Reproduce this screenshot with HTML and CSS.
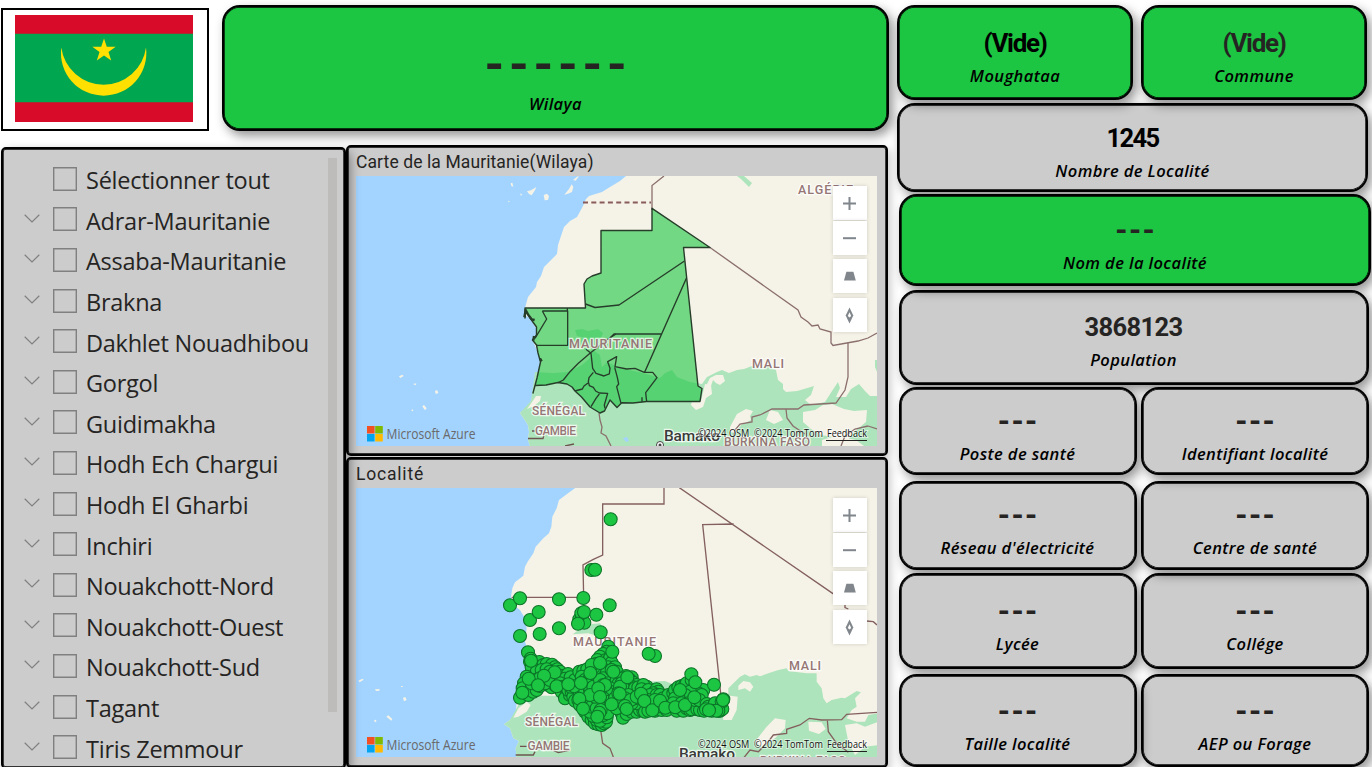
FILE: index.html
```html
<!DOCTYPE html>
<html lang="fr">
<head>
<meta charset="utf-8">
<title>Carte de la Mauritanie</title>
<link rel="stylesheet" href="styles.css">
</head>
<body>
<svg class="defs" width="0" height="0" aria-hidden="true">
  <defs>
    <marker id="dot" markerUnits="userSpaceOnUse" markerWidth="46" markerHeight="46" viewBox="-23 -23 46 46" refX="0" refY="0">
      <circle r="19.5" fill="#1cc642" stroke="#0c7428" stroke-width="3.200"/>
    </marker>
    <symbol id="chev" viewBox="0 0 16 9"><path d="M.7.8 8 8 15.3.8" fill="none" stroke="#808080" stroke-width="1.2"/></symbol>
    <symbol id="ms" viewBox="0 0 16 16"><path fill="#f25022" d="M0 0h7.6v7.5H0z"/><path fill="#7fba00" d="M8.2 0h7.6v7.5H8.2z"/><path fill="#00a4ef" d="M0 8h7.6v7.5H0z"/><path fill="#ffb900" d="M8.2 8h7.6v7.5H8.2z"/></symbol>
    <symbol id="plus" viewBox="0 0 34 34"><path d="M10 17.5h13M16.500 11v13" stroke="#80868b" stroke-width="2" fill="none"/></symbol>
    <symbol id="minus" viewBox="0 0 34 34"><path d="M10 17.200h13" stroke="#80868b" stroke-width="2"/></symbol>
    <symbol id="pitch" viewBox="0 0 34 34"><path d="M13.400 12.7h7L22.800 21.4H11z" fill="#80868b"/></symbol>
    <symbol id="compass" viewBox="0 0 34 34"><path d="M16.500 9.500 20.300 17.500 16.500 25.500 12.700 17.500z" fill="#80868b"/><path d="M16.500 14.300 18.200 18 16.500 19.600 14.800 18z" fill="#fff"/></symbol>
  </defs>
</svg>
<main class="page">
  <section class="left">
    <header class="top">
      <div class="flag">
        <svg width="178" height="107" viewBox="0 0 178 107">
          <path fill="#d80b29" d="M0 0h178v107H0z"/>
          <path fill="#00a650" d="M0 18.700h178v68.600H0z"/>
          <path fill="#ffe000" d="M46.300 32.500A42.700 42.700 0 1 0 131 32.500A42.700 42.700 0 0 1 46.300 32.500z"/>
          <path fill="#ffe000" d="M89 23.500 91.800 31.800 100.700 31.800 93.500 37 96.200 45.500 89 40.500 81.800 45.500 84.500 37 77.300 31.800 86.200 31.800z"/>
        </svg>
      </div>
      <article class="card green wilaya"><b class="value">------</b><span class="label">Wilaya</span></article>
    </header>
    <div class="lower">
      <aside class="slicer">
        <ul class="tree">
          <li class="all"><i></i><span>Sélectionner tout</span></li>
          <li><svg><use href="#chev"/></svg><i></i><span>Adrar-Mauritanie</span></li>
          <li><svg><use href="#chev"/></svg><i></i><span>Assaba-Mauritanie</span></li>
          <li><svg><use href="#chev"/></svg><i></i><span>Brakna</span></li>
          <li><svg><use href="#chev"/></svg><i></i><span>Dakhlet Nouadhibou</span></li>
          <li><svg><use href="#chev"/></svg><i></i><span>Gorgol</span></li>
          <li><svg><use href="#chev"/></svg><i></i><span>Guidimakha</span></li>
          <li><svg><use href="#chev"/></svg><i></i><span>Hodh Ech Chargui</span></li>
          <li><svg><use href="#chev"/></svg><i></i><span>Hodh El Gharbi</span></li>
          <li><svg><use href="#chev"/></svg><i></i><span>Inchiri</span></li>
          <li><svg><use href="#chev"/></svg><i></i><span>Nouakchott-Nord</span></li>
          <li><svg><use href="#chev"/></svg><i></i><span>Nouakchott-Ouest</span></li>
          <li><svg><use href="#chev"/></svg><i></i><span>Nouakchott-Sud</span></li>
          <li><svg><use href="#chev"/></svg><i></i><span>Tagant</span></li>
          <li><svg><use href="#chev"/></svg><i></i><span>Tiris Zemmour</span></li>
        </ul>
        <div class="thumb"></div>
      </aside>
      <div class="maps">
        <section class="panel panel-a">
          <h2 class="title t1">Carte de la Mauritanie(Wilaya)</h2>
          <div class="map">
            <svg class="canvas" width="521" height="270" viewBox="356 176 521 270">
              <path fill="#a3d4ff" d="M356 176h521v270H356z"/>
              <path fill="#f5f3e7" d="M626 176 620 181 610 187 602 192 589 196 586 199 583 206 577 217 570 221 564 227 561 236 558 245 557 254 550 261 544 267 541 276 537 282 536 287 528 297 525 308 526 316 530 318 537 330 536 338 533 341 539 355 541 362 536 383 533 393 531 401 526 409 520 413 528 425 529 432 528 440 530 446 877 446 877 176z"/>
              <g fill="#f5f3e7" transform="translate(345 140) scale(.33333)">
                <path d="M497 130l5-2 3 12-6-2zM546 154l12-3 16-10-4 10-10 15-8-4zM596 165l10-4 6 8-3 11-10 1zM658 164l14-17 8-14 5 8-4 15-12 5zM684 120l12-10 6-1-10 13zM490 182l5 3-5 2zM526 160l6 4-5 3zM162 709l10-5 4 4-10 6zM204 732l10-2-2 6zM270 752l7-1 3 8-8 3zM232 799l5-4 8 10-5 6zM199 810l4-2 2 4-4 2z"/>
              </g>
              <g fill="#aee4bb">
                <path d="M535 372 553 373 568 372 582 365 590 358 593 350 600 355 602 367 607 362 620 368 643 373 660 378 665 373 672 370 677 377 690 382 702 384 707 377 717 372 722 370 729 373 737 370 744 369 752 366 758 368 767 366 776 370 778 380 783 384 783 389 786 392 797 391 804 389 814 386 811 395 805 400 811 405 825 402 832 391 838 382 840 388 836 397 846 397 851 389 859 384 865 391 870 396 877 396 877 446 530 446 528 440 529 432 528 425 520 413 531 401z"/>
                <path d="M575 330 582 329 588 331 598 329 603 333 601 338 590 339 577 336zM737 176l4 3 8 8 3-4-8-7zM875 360l2 0v12l-2-5z"/>
              </g>
              <g fill="#f5f3e7">
                <path d="M692 401h9l4-17 6 1 1 9-6 4-3 9-7 3-5-5zM704 390l6-12 6-3 7 0 2 6-5 4-4-2-3-3-2 6zM730 427l7-13 9-5 7 2-3 5 1 4-10 5-6 8-5-1zM803 412l12-2 8-5 9-1 12 5 10 2 13-1-1 12-12 10-6 8-15-3-12-2-10-6-8-7zM770 410l8 2 5 8-9 4-8-4zM822 440l14-4 20 4 8 6h-42z"/>
                <path d="M527 409 532 402 536 396 541 396 540 401 534 406z"/>
              </g>
              <path fill="#a3d4ff" d="M623 438l4-1 2 4-3 1z"/>
              <g fill="none" stroke="#8b6f6e" stroke-width="1.300">
                <path stroke="#8a5b5b" stroke-width="2" stroke-dasharray="5 3.300" d="M583 202.500H651"/>
                <path d="M652 210V185.500L664 176M710 247.500 798 310 801 317 808 322 812 326 818 325 820 329 831 332 831 343 833 345.500 858 341 868 338 877 333M848 343V377L845 390 836 403 804 405 798 409H772L760 415 752 417 752 422 740 424 735 430 733 440 725 446M786 409 787 418 793 426 805 434M868 426 855 429 845 436 841 446M868 426 877 429M599 413 600 420 602 427 601 433 606 436 611 446"/>
                <path stroke="#6e5450" d="M528 438.500H543L544 435M565 446 574 444M532 431h3"/>
              </g>
              <g fill="#1cc642" fill-opacity=".6" stroke="#263d2a" stroke-width="1.400" stroke-linejoin="round">
                <path d="M525 308H585.500L584 284 587 279 592 276 601 273V230.500H652V208.300L710 247.500H683.500L698 386 702 388.500 700 401.500H646.500L633 403 621.700 402.700 617 407.500 610 400 604.500 411 600 413 590 407 581.500 397 575 391 572 387 567 384 558 382.500 546 385 535 385.500 533 393 537 378 540.500 362 538 353 536.500 345 532.500 340 536.500 335 536.500 327 530 318 526 311 525 318z"/>
                <path fill="none" d="M585.500 304 595 307.500 619 305 684.500 261M686.500 278 644.500 372.500M661.500 334H614L610 338"/>
                <g fill="none" stroke-width="4" transform="translate(510 290) scale(.33333)">
                  <path d="M172 54V63M97 63H173V166H80M97 63 110 87 75 145M318 132 290 150 240 190 205 220 180 245 160 270 145 278M228 178 243 190 248 235 258 250 282 258 298 252 300 235 293 215 320 200 315 230 350 237 375 235 403 247 428 247 441 263 407 308 410 335M396 322V335M314 232 322 262 326 282 320 290 333 340M250 247 237 263 235 275 238 287 250 292 257 303 268 309 293 310 283 345 285 355M268 312 258 325 243 350M237 277 222 288 217 297 195 303"/>
                  <path stroke-width="7" d="M43 82 47 60 55 75 65 88 74 90M72 138 70 152M90 205 95 214"/>
                </g>
              </g>
              <g class="names">
                <text x="569" y="348" textLength="83">MAURITANIE</text>
                <text x="532" y="415" class="s" textLength="53">SÉNÉGAL</text>
                <text x="535" y="435" class="s" textLength="41">GAMBIE</text>
                <text x="752" y="368" textLength="32">MALI</text>
                <text x="798" y="193.500" textLength="55">ALGÉRIE</text>
                <text x="724" y="445.500" class="s" textLength="86">BURKINA FASO</text>
                <text x="664" y="441" class="city" textLength="56">Bamako</text>
              </g>
              <circle cx="660" cy="445" r="3.500" fill="#fff" stroke="#444"/><circle cx="660" cy="445" r="1.500" fill="#444"/>
              <use href="#ms" x="367" y="426" width="16" height="16"/>
              <text class="azure" x="386.500" y="439" textLength="89" lengthAdjust="spacingAndGlyphs">Microsoft Azure</text>
              <text class="attr" x="698" y="437.300" textLength="125" lengthAdjust="spacingAndGlyphs">©2024 OSM&#160; ©2024 TomTom</text>
              <text class="attr" x="827" y="437.300" textLength="40" lengthAdjust="spacingAndGlyphs">Feedback</text>
              <path d="M826 440.500h41" stroke="#222"/>
            </svg>
            <div class="controls"><svg><use href="#plus"/></svg><svg><use href="#minus"/></svg><svg class="gap"><use href="#pitch"/></svg><svg class="gap"><use href="#compass"/></svg></div>
          </div>
        </section>
        <section class="panel panel-b">
          <h2 class="title t2">Localité</h2>
          <div class="map">
            <svg class="canvas" width="521" height="269" viewBox="356 488 521 269">
              <path fill="#a3d4ff" d="M356 488h521v269H356z"/>
              <g transform="translate(345 455) scale(.33333)">
                <path fill="#f5f3e7" d="M692 98 665 118 642 135 635 160 622 185 619 215 612 235 595 250 572 275 565 295 548 320 540 335 535 362 510 382 502 400 498 425 505 450 525 465 540 490 545 520 540 560 550 590 535 610 545 650 525 700 515 745 512 775 495 795 477 808 495 820 505 850 522 858 512 880 515 910 1600 910 1600 98z"/>
                <path fill="#f5f3e7" d="M40 677l12-6 4 3-12 8zM90 703l14-1-1 5-10 1zM174 728l7-2 4 9-8 4zM124 785l6-4 12 11-3 5zM87 796l5-2 3 5-5 3zM168 693h5v3h-5z"/>
                <path fill="#aee4bb" d="M512 765 525 740 590 722 630 722 690 690 760 660 800 680 900 680 960 678 985 688 1010 700 1100 730 1150 740 1150 700 1160 690 1185 665 1200 658 1215 665 1235 660 1245 664 1270 655 1300 645 1325 640 1330 648 1360 652 1385 655 1415 655 1415 680 1430 700 1435 730 1445 745 1460 735 1490 728 1500 730 1535 708 1548 712 1530 730 1535 755 1520 765 1505 790 1535 800 1560 800 1570 780 1600 775 1600 910 515 910 512 880 522 858 505 850 495 820 477 808 495 795zM683 538 705 522 735 508 765 505 775 520 765 545 730 535z"/>
                <g fill="#f5f3e7"><path d="M505 788 520 760 545 740 557 750 545 770 520 785zM1135 795 1160 795 1175 765 1178 725 1155 722 1130 750zM1180 692 1195 678 1215 682 1225 695 1215 710 1200 700 1180 705zM1230 860 1265 815 1290 790 1322 795 1320 820 1290 850 1250 875zM1500 810 1535 805 1560 815 1600 800 1600 870 1560 875 1530 900 1510 860zM1390 800l40 2 12 20-20 15-30-10z"/></g>
                <g fill="none" stroke="#83605f" stroke-width="4">
                  <path d="M500 427H716L714 330 745 313 773 300V147H957V98M1003 98 1464 416 1500 440V458L1510 462M1564 498 1585 500 1596 510M1166 207 1073 209 1127 715M1596 772 1505 778 1490 794 1430 795 1393 790 1365 810 1325 823V835L1285 840 1270 860 1240 890 1215 885 1195 910M1447 795 1450 830 1475 865 1510 892M767 825 773 865 795 880 805 906"/>
                  <path stroke="#6e5450" d="M512 900H565L570 890M610 880 640 893 675 885M525 874h20"/>
                </g>
              </g>
              <g class="names">
                <text x="573" y="645.500" textLength="83">MAURITANIE</text>
                <text x="525" y="726" class="s" textLength="53">SÉNÉGAL</text>
                <text x="527.500" y="750" class="s" textLength="42">GAMBIE</text>
                <text x="789" y="669.500" textLength="32">MALI</text>
                <text x="760" y="764.500" class="s" textLength="86">BURKINA FASO</text>
                <text x="679" y="759" class="city" textLength="56">Bamako</text>
              </g>
              <g transform="translate(500 580) scale(.33333)" fill="none">
                <polyline class="dots" points="332,-182 274,-30 285,-31 30,76 60,55 177,58 250,54 90,120 116,96 60,168 119,162 177,145 238,118 246,108 253,128 244,100 234,131 252,96 289,104 329,76 302,157 465,228 446,221"/>
                <polyline class="dots" points="84,217 92,236 90,245 105,250 118,246 130,255 140,252 156,254 165,262 172,268 180,275 95,262 110,275 125,270 140,268 150,275 160,285 170,290 185,288 204,282 195,296 212,292 80,290 72,310 68,325 75,340 60,353 85,345 100,335 110,330 120,318 95,310 105,300 120,295 140,300 145,315 155,322 165,315 135,310 150,300 180,310 190,320 185,335 200,345 195,355 210,345 205,330 215,335 220,350 225,362 235,360 212,320 225,300 238,275 250,272 262,268 245,290 255,300 270,295 285,300 230,325 240,340 255,330 270,330 265,315 280,320 295,345"/>
                <polyline class="dots" points="325,200 320,215 310,222 300,230 292,240 288,252 310,250 318,240 330,235 335,248 325,262 310,268 300,280 290,270 280,262 275,255 345,262 342,280 330,290 320,280 310,295 300,300 335,270 350,275 325,310 340,315 350,300 355,312 330,325 345,335 335,345 350,350 320,335 310,315 300,335 310,355 325,365 345,365 330,380 315,380 295,370 280,365 265,355 250,365 260,375 240,375 255,395 265,410 275,420 285,430 295,433 305,435 312,430 318,425 290,420 300,422 280,408 320,412 310,405 290,395 270,395 322,400 275,380 290,385 302,390 285,350 270,345"/>
                <polyline class="dots" points="378,288 395,292 390,300 370,295 365,310 380,315 400,308 410,315 395,320 385,330 370,325 360,320 405,325 415,322 440,320 430,315 425,328 445,330 470,328 475,335 460,340 450,345 470,345 480,345 490,355 500,365 385,345 375,355 365,365 355,375 365,400 369,413 380,402 395,395 400,385 410,395 420,390 430,392 440,385 425,375 410,370 395,370 405,355 435,395 450,385 465,392 475,385 485,390 500,390 490,375 475,370 455,370 445,360 470,380 350,385 345,355 355,340 392,360 510,365 515,350 505,345 445,392 410,350 432,360 465,360 375,378"/>
                <polyline class="dots" points="520,340 525,330 535,322 545,318 555,315 540,335 550,330 565,325 560,310 575,300 585,320 600,330 610,330 595,340 605,345 570,335 555,345 535,350 525,355 520,370 530,392 540,385 550,392 560,385 570,390 555,375 565,370 580,375 590,380 575,388 592,388 605,375 600,390 612,392 585,360 598,360 545,370 620,372 625,380 618,388 640,390 650,385 655,375 660,372 645,370 660,392 667,387 665,365 670,358 655,392 635,392 649,392 574,283"/>
                <polyline class="dots" points="93,242 164,277 132,287 86,296 114,316 67,338 170,319 222,319 205,313 243,309 238,356 249,386 300,249 271,279 340,275 337,215 315,315 295,325 300,351 335,373 298,398 292,410 359,341 380,387 382,292 423,341 433,363 457,391 480,362 496,383 526,382 555,375 540,330 586,307 583,352 642,314 627,391 669,360"/>
              </g>
              <use href="#ms" x="367" y="737" width="16" height="16"/>
              <text class="azure" x="386.500" y="750" textLength="89" lengthAdjust="spacingAndGlyphs">Microsoft Azure</text>
              <text class="attr" x="698" y="748.300" textLength="125" lengthAdjust="spacingAndGlyphs">©2024 OSM&#160; ©2024 TomTom</text>
              <text class="attr" x="827" y="748.300" textLength="40" lengthAdjust="spacingAndGlyphs">Feedback</text>
              <path d="M827 751.500h40" stroke="#222"/>
            </svg>
            <div class="controls"><svg><use href="#plus"/></svg><svg><use href="#minus"/></svg><svg class="gap"><use href="#pitch"/></svg><svg class="gap"><use href="#compass"/></svg></div>
          </div>
        </section>
      </div>
    </div>
  </section>
  <section class="right">
    <div class="row r1">
      <article class="card green raised black"><b class="value">(Vide)</b><span class="label">Moughataa</span></article>
      <article class="card green raised"><b class="value">(Vide)</b><span class="label">Commune</span></article>
    </div>
    <div class="row r2"><article class="card black"><b class="value num tight">1245</b><span class="label">Nombre de Localité</span></article></div>
    <div class="row r3"><article class="card green raised"><b class="value dash">---</b><span class="label">Nom de la localité</span></article></div>
    <div class="row r4"><article class="card"><b class="value num">3868123</b><span class="label">Population</span></article></div>
    <div class="row r5">
      <article class="card"><b class="value dash">---</b><span class="label">Poste de santé</span></article>
      <article class="card top2"><b class="value dash">---</b><span class="label">Identifiant localité</span></article>
    </div>
    <div class="row r6">
      <article class="card"><b class="value dash">---</b><span class="label">Réseau d'électricité</span></article>
      <article class="card top1"><b class="value dash">---</b><span class="label">Centre de santé</span></article>
    </div>
    <div class="row r7">
      <article class="card"><b class="value dash">---</b><span class="label">Lycée</span></article>
      <article class="card"><b class="value dash">---</b><span class="label">Collége</span></article>
    </div>
    <div class="row r8">
      <article class="card top1"><b class="value dash">---</b><span class="label">Taille localité</span></article>
      <article class="card"><b class="value dash">---</b><span class="label">AEP ou Forage</span></article>
    </div>
  </section>
</main>
</body>
</html>
```
FILE: styles.css
```css
* { box-sizing: border-box; }
body { margin: 0; background: #fff; font-family: "Open Sans", "Noto Sans", sans-serif; }
.defs { position: absolute; }
.page { width: 1372px; height: 767px; display: flex; overflow: hidden; }

.left { width: 897px; padding-left: 1px; flex: none; }
.top { display: flex; height: 131px; }
.flag {
  width: 208px; height: 123px; margin-top: 8px; flex: none;
  border: 2px solid #000; padding: 5px 0 0 12px; background: #fff;
}
.flag svg { display: block; }
.card {
  display: flex; flex-direction: column; align-items: center; justify-content: center;
  border: 2px solid #000; border-radius: 18px; background: #ccc; padding-top: 10px;
  box-shadow: inset 0 0 0 .7px #000, 4px 5px 11px rgba(0, 0, 0, .42);
  color: #252423;
}
.green { background: #1cc642; }
.black { color: #000; }
.raised { position: relative; z-index: 3; }
.top1 { position: relative; z-index: 1; }
.top2 { position: relative; z-index: 2; }
.value {
  font: 700 26px/28px Roboto, sans-serif;
  letter-spacing: -1.300px; white-space: nowrap;
}
.num { font-size: 25.500px; letter-spacing: -.6px; }
.tight { letter-spacing: -1.600px; }
.dash { font-size: 31px; line-height: 29px; letter-spacing: 1.500px; margin: 0 -1.500px -1px 0; }
.label {
  font-size: 16.500px; line-height: 22px; font-style: italic; font-weight: 600;
  letter-spacing: .4px; color: #000; white-space: nowrap; margin-top: 8px;
}
.wilaya { width: 667px; height: 126px; margin: 5px 0 0 13px; padding-top: 22px; }
.wilaya .value { font-size: 50px; line-height: 44px; letter-spacing: 4.800px; margin-right: -4.800px; }
.wilaya .label { margin-top: 6px; }

.lower { display: flex; padding-top: 14px; }
.slicer {
  width: 345px; height: 622px; margin-top: 2px; flex: none;
  position: relative; z-index: 1; display: flex; justify-content: space-between;
  background: #ccc; border: 2px solid #000; border-radius: 5px;
  box-shadow: inset 0 0 0 .7px #000, 4px 5px 11px rgba(0, 0, 0, .42);
}
.tree { list-style: none; margin: 0; padding: 9.500px 0 0 20.500px; }
.tree li { display: flex; align-items: center; height: 40.600px; font-size: 23.500px; color: #252423; white-space: nowrap; }
.tree .all { padding-left: 29px; }
.tree svg { width: 16px; height: 9px; margin: 0 13px 2px 0; }
.tree i { width: 24px; height: 24px; border: 1px solid #808080; box-shadow: inset 0 0 0 .4px #808080; margin: 0 9.500px 0 0; }
.tree span { letter-spacing: -.25px; line-height: 30px; padding-top: 3px; }
.thumb { width: 9px; height: 554px; background: #bdbcbb; margin: 9px 7px 0 0; }

.maps { width: 542px; display: flex; flex-direction: column; gap: 1px; }
.panel {
  border: 2px solid #000; border-radius: 5px; background: #ccc;
  padding: 0 8px 0 8px; box-shadow: inset 0 0 0 .7px #000, 3px 4px 8px rgba(0, 0, 0, .2);
}
.panel-a { height: 311px; }
.panel-b { height: 311px; }
.title { margin: 0; height: 29px; padding-top: 1px; font: 400 17.500px/29px Roboto, sans-serif; color: #252423; }
.t1 { letter-spacing: .1px; }
.t2 { letter-spacing: .8px; }
.map { position: relative; width: 521px; }
.canvas { display: block; }
.controls { position: absolute; top: 10px; right: 10px; display: flex; flex-direction: column; }
.controls svg { width: 34px; height: 34px; background: #fff; box-shadow: 0 0 4px rgba(0, 0, 0, .16); margin-bottom: .5px; }
.controls .gap { margin-top: 4px; }
.names { font: 500 12.500px Roboto, sans-serif; fill: #957675; stroke: #fff; stroke-opacity: .75; stroke-width: 2.500px; paint-order: stroke; }
.names .s { font-size: 12px; }
.names .city { font-size: 15.500px; fill: #3a3a3a; font-weight: 500; }
.azure { font: 400 14.500px "Open Sans", sans-serif; fill: #6a6a6a; }
.attr { font: 400 10px "Open Sans", sans-serif; fill: #111; stroke: #fff; stroke-opacity: .5; stroke-width: 2px; paint-order: stroke; }
.dots { stroke: none; marker: url(#dot); }

.right { width: 475px; flex: none; display: flex; flex-direction: column; }
.row { display: flex; flex: none; }
.r1 { height: 95px; margin-top: 5px; gap: 8px; }
.r1 .card:first-child { width: 236px; }
.r1 .card:last-child { width: 226px; }
.r2 { height: 89px; margin-top: 3px; }
.r2 .card { width: 471px; }
.r3 { height: 92px; margin: 2px 0 0 2px; }
.r3 .card { width: 472px; }
.r4 { height: 94.500px; margin: 4px 0 0 1.500px; }
.r4 .card { width: 470px; }
.r5, .r6, .r7, .r8 { margin-left: 1.500px; display: grid; grid-template-columns: 238px 228px; column-gap: 4.500px; }
.r5 { height: 88px; margin-top: 2.500px; }
.r6 { height: 89px; margin-top: 5.500px; }
.r7 { height: 96px; margin-top: 3.500px; }
.r8 { height: 93px; margin-top: 5px; }
```
